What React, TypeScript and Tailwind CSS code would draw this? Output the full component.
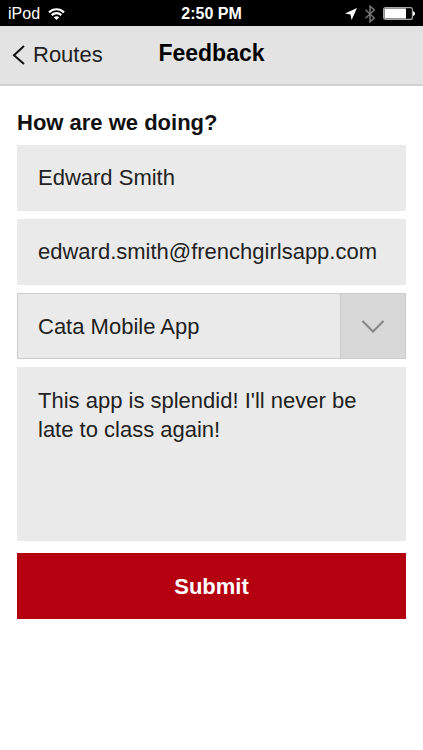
import React from "react";

const field =
  "block w-full appearance-none rounded-none border-0 bg-[#eaeaea] px-[21px] text-[22px] text-[#222222] outline-none";

function StatusBar() {
  return (
    <div className="grid h-[26px] grid-cols-3 items-center bg-black px-2 pt-px text-white">
      <div className="flex items-center gap-2">
        <span className="text-base leading-6">iPod</span>
        <svg width="17" height="12" viewBox="0 0 17 12" fill="none" stroke="white" strokeWidth="2.2" aria-hidden="true">
          <path d="M1 4.4C5.2.2 11.8.2 16 4.4" />
          <path d="M3.7 7.1c2.7-2.6 6.9-2.6 9.6 0" />
          <path d="M8.5 12 5.7 9.2c1.6-1.4 4-1.4 5.6 0z" fill="white" stroke="none" />
        </svg>
      </div>
      <span className="text-center text-base leading-6 font-bold">2:50 PM</span>
      <div className="flex items-center justify-end">
        <svg width="12" height="12" viewBox="0 0 12 12" fill="white" aria-hidden="true">
          <path d="M12 0 6.6 12 5.5 6.5 0 5.4z" />
        </svg>
        <svg className="ml-2" width="10" height="18" viewBox="0 0 10 18" fill="none" stroke="#767676" strokeWidth="1.5" aria-hidden="true">
          <path d="M.5 4.8 9.3 13 5 16.8V1.2L9.3 5 .5 13.2" />
        </svg>
        <svg className="ml-2" width="32" height="13" viewBox="0 0 32 13" aria-hidden="true">
          <rect x=".6" y=".6" width="28.8" height="11.8" rx="2" fill="none" stroke="#a8a8a8" strokeWidth="1.2" />
          <rect x="1.5" y="1.5" width="21.5" height="10" rx="0.5" fill="white" />
          <path d="M30 4.2c2.8.7 2.8 3.9 0 4.6z" fill="white" />
        </svg>
      </div>
    </div>
  );
}

export default function App() {
  return (
    <div className="min-h-screen bg-white font-['Liberation_Sans',Arial,sans-serif] text-[#111111]">
      <StatusBar />
      <header className="grid h-[60px] grid-cols-[1fr_auto_1fr] items-center border-b-2 border-[#d0d0d0] bg-[#e3e3e3] px-3">
        <a href="#routes" className="flex items-center gap-2 pb-px text-[22px] leading-7 text-[#222222]">
          <svg width="13" height="20" viewBox="0 0 13 20" fill="none" stroke="#111111" strokeWidth="2" aria-hidden="true">
            <path d="M12 1 2 10.2 12 19" />
          </svg>
          Routes
        </a>
        <h1 className="pb-1 text-[23px] leading-7 font-bold text-black">Feedback</h1>
      </header>
      <main className="px-[17px] pt-[22px]">
        <form onSubmit={(e) => e.preventDefault()}>
          <h2 className="mb-2 text-[22px] leading-[29px] font-bold">How are we doing?</h2>
          <div className="flex flex-col gap-2">
            <input aria-label="Name" type="text" defaultValue="Edward Smith" className={`${field} h-[66px]`} />
            <input aria-label="Email" type="email" defaultValue="edward.smith@frenchgirlsapp.com" className={`${field} h-[66px]`} />
            <div className="grid">
              <select
                aria-label="Topic"
                className="col-start-1 row-start-1 block h-[66px] w-full appearance-none rounded-none border border-[#cccccc] bg-[#eaeaea] pr-[70px] pl-5 text-[22px] text-[#222222] outline-none"
              >
                <option>Cata Mobile App</option>
              </select>
              <div className="pointer-events-none col-start-1 row-start-1 flex h-[66px] w-[66px] items-center justify-center justify-self-end border border-[#cccccc] bg-[#d8d8d8]">
                <svg width="24" height="14" viewBox="0 0 24 14" fill="none" stroke="#858585" strokeWidth="2" aria-hidden="true">
                  <path d="M1.5 2 12 12.5 22.5 2" />
                </svg>
              </div>
            </div>
            <textarea
              aria-label="Message"
              defaultValue="This app is splendid! I'll never be late to class again!"
              className={`${field} h-[174px] resize-none py-[19px] leading-[29px]`}
            />
          </div>
          <button type="submit" className="mt-3 h-[66px] w-full bg-[#b5000f] text-[22px] font-bold text-white">
            Submit
          </button>
        </form>
      </main>
    </div>
  );
}
